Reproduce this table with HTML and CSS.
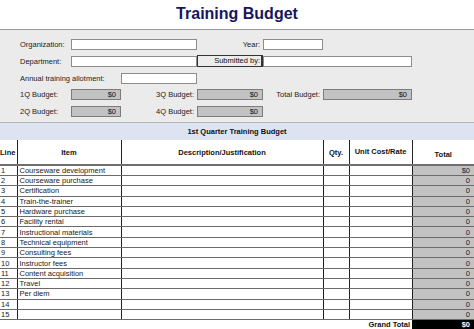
FILE: index.html
```html
<!DOCTYPE html>
<html>
<head>
<meta charset="utf-8">
<link rel="stylesheet" href="styles.css">
</head>
<body>
<header class="title">Training Budget</header>
<section class="form">
  <span class="lbl">Organization:</span>
  <span class="field c2-4"></span>
  <span class="lbl right c4">Year:</span>
  <span class="field c5"></span>

  <span class="lbl">Department:</span>
  <span class="field c2-4"></span>
  <span class="submitted c4">Submitted by:</span>
  <span class="field c5-7"></span>

  <span class="lbl c1-3">Annual training allotment:</span>
  <span class="field c3"></span>

  <span class="lbl">1Q Budget:</span>
  <span class="money c2">$0</span>
  <span class="lbl right c3">3Q Budget:</span>
  <span class="money c4">$0</span>
  <span class="lbl right c5">Total Budget:</span>
  <span class="money c6">$0</span>

  <span class="lbl">2Q Budget:</span>
  <span class="money c2">$0</span>
  <span class="lbl right c3">4Q Budget:</span>
  <span class="money c4">$0</span>
</section>
<table class="budget">
  <colgroup>
    <col class="w-line"><col class="w-item"><col class="w-desc"><col class="w-qty"><col class="w-unit"><col class="w-total">
  </colgroup>
  <thead>
    <tr class="band"><th colspan="6">1st Quarter Training Budget</th></tr>
    <tr class="head">
      <th class="left">Line</th>
      <th>Item</th>
      <th>Description/Justification</th>
      <th>Qty.</th>
      <th class="top">Unit Cost/Rate</th>
      <th class="low">Total</th>
    </tr>
  </thead>
  <tbody>
    <tr><td>1</td><td>Courseware development</td><td></td><td></td><td></td><td class="tot">$0</td></tr>
    <tr><td>2</td><td>Courseware purchase</td><td></td><td></td><td></td><td class="tot">0</td></tr>
    <tr><td>3</td><td>Certification</td><td></td><td></td><td></td><td class="tot">0</td></tr>
    <tr><td>4</td><td>Train-the-trainer</td><td></td><td></td><td></td><td class="tot">0</td></tr>
    <tr><td>5</td><td>Hardware purchase</td><td></td><td></td><td></td><td class="tot">0</td></tr>
    <tr><td>6</td><td>Facility rental</td><td></td><td></td><td></td><td class="tot">0</td></tr>
    <tr><td>7</td><td>Instructional materials</td><td></td><td></td><td></td><td class="tot">0</td></tr>
    <tr><td>8</td><td>Technical equipment</td><td></td><td></td><td></td><td class="tot">0</td></tr>
    <tr><td>9</td><td>Consulting fees</td><td></td><td></td><td></td><td class="tot">0</td></tr>
    <tr><td>10</td><td>Instructor fees</td><td></td><td></td><td></td><td class="tot">0</td></tr>
    <tr><td>11</td><td>Content acquisition</td><td></td><td></td><td></td><td class="tot">0</td></tr>
    <tr><td>12</td><td>Travel</td><td></td><td></td><td></td><td class="tot">0</td></tr>
    <tr><td>13</td><td>Per diem</td><td></td><td></td><td></td><td class="tot">0</td></tr>
    <tr><td>14</td><td></td><td></td><td></td><td></td><td class="tot">0</td></tr>
    <tr><td>15</td><td></td><td></td><td></td><td></td><td class="tot">0</td></tr>
  </tbody>
  <tfoot>
    <tr class="grand"><td colspan="5">Grand Total</td><td class="gt">$0</td></tr>
  </tfoot>
</table>
</body>
</html>
```

FILE: styles.css
```css
* { box-sizing: border-box; }
html, body { margin: 0; padding: 0; background: #fff; }
body {
  width: 474px;
  height: 329px;
  overflow: hidden;
  font-family: "Liberation Sans", Arial, sans-serif;
  font-size: 7.5px;
  color: #111;
}
.title {
  height: 30px;
  padding-top: 5px;
  text-align: center;
  font-size: 16px;
  font-weight: bold;
  color: #16165e;
  border-bottom: 1px solid #9a9a9a;
  line-height: 18px;
}
.form {
  background: #ebebeb;
  height: 93px;
  padding: 9px 0 0 20px;
  display: grid;
  grid-template-columns: 51px 50px 76px 66px 60px 89px 62px;
  grid-auto-rows: 11px;
  row-gap: 5.75px;
  align-items: center;
  border-bottom: 1px solid #b5b5b5;
}
.lbl { grid-column: 1; white-space: nowrap; line-height: 11px; color: #222; }
.lbl.right { text-align: right; padding-right: 3px; }
.c1-3 { grid-column: 1 / 3; }
.c2 { grid-column: 2; }
.c2-4 { grid-column: 2 / 4; }
.c3 { grid-column: 3; }
.c4 { grid-column: 4; }
.c5 { grid-column: 5; }
.c5-7 { grid-column: 5 / 7; }
.c6 { grid-column: 6; }
.field {
  height: 11px;
  background: #fff;
  border: 1px solid #8c8c8c;
}
.submitted {
  height: 12px;
  border: 1px solid #333;
  border-right-width: 2px;
  background: #ececec;
  text-align: right;
  padding-right: 1px;
  line-height: 10px;
}
.money {
  height: 11px;
  background: #c2c2c2;
  border: 1px solid #7c7c7c;
  text-align: right;
  padding-right: 4px;
  line-height: 9px;
}
.budget {
  width: 474px;
  border-collapse: collapse;
  table-layout: fixed;
}
.w-line { width: 17px; }
.w-item { width: 104px; }
.w-desc { width: 202px; }
.w-qty { width: 26px; }
.w-unit { width: 63px; }
.w-total { width: 62px; }
.band th {
  height: 17px;
  background: #dde3f1;
  font-weight: bold;
  text-align: center;
  padding: 0;
  line-height: 10px;
}
.head th {
  height: 25px;
  padding: 8px 0 0 0;
  vertical-align: top;
  font-weight: bold;
  text-align: center;
  border-left: 1px solid #222;
  border-bottom: 2px solid #6f6f6f;
  line-height: 9px;
}
.head th.left { border-left: none; text-align: left; padding-left: 0; }
.head th.top { padding-top: 7px; }
.head th.low { padding-top: 10px; }
tbody td {
  height: 10.3px;
  padding: 0 0 0 2px;
  line-height: 9px;
  border-left: 1px solid #222;
  border-bottom: 1px solid #6a6a6a;
  white-space: nowrap;
  overflow: hidden;
  color: #1a1a1a;
}
tbody td:first-child { border-left: none; padding-left: 1px; }
tbody td.tot {
  background: #c2c2c2;
  text-align: right;
  padding: 0 4px 0 0;
}
.grand td {
  height: 10px;
  padding: 0;
  line-height: 10px;
  font-weight: bold;
  text-align: right;
  padding-right: 2px;
}
.grand td.gt {
  background: #000;
  color: #fff;
  padding-right: 4px;
}
```
